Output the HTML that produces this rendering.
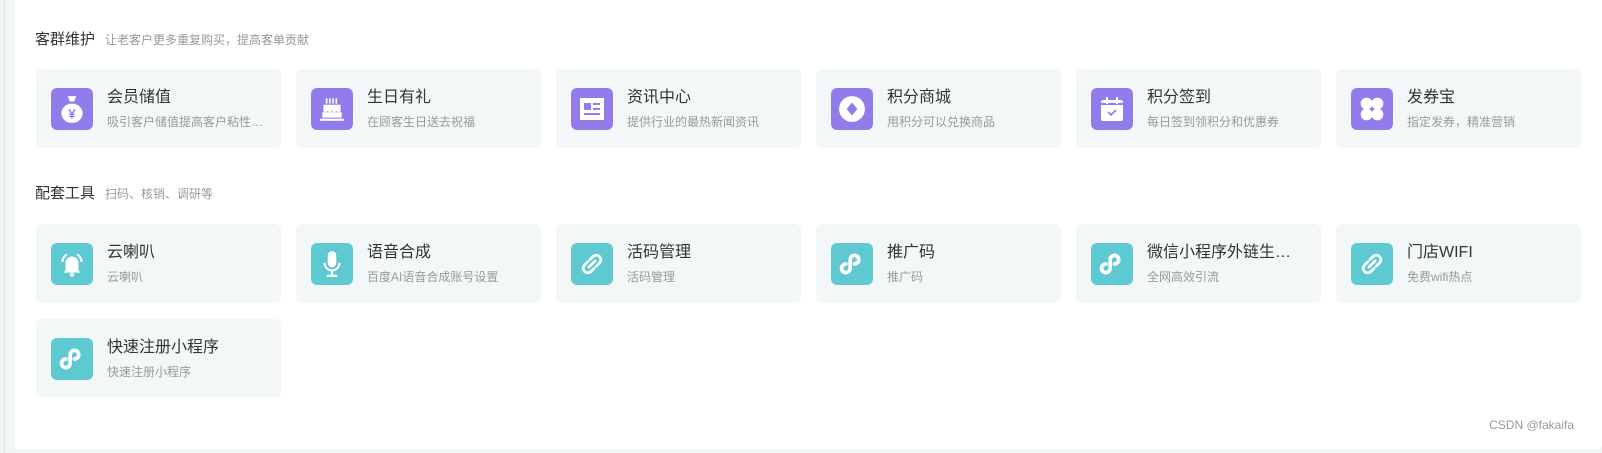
<!DOCTYPE html>
<html><head><meta charset="utf-8"><style>
*{margin:0;padding:0;box-sizing:border-box}
body{width:1602px;height:453px;background:#f3f6f7;font-family:"Liberation Sans","Noto Sans CJK SC",sans-serif;position:relative;overflow:hidden}
.lb{position:absolute;left:4px;top:0;width:1px;height:453px;background:#dde3e6}
.panel{position:absolute;left:15px;top:0;width:1587px;height:449px;background:#fff;border-radius:0 0 4px 4px}
.h{position:absolute;left:35px;font-size:15px;color:#333;line-height:20px}
.h span{font-size:12px;color:#999;margin-left:10px}
.c{position:absolute;width:245px;height:79px;background:#f4f7f8;border-radius:6px}
.ic{position:absolute;left:15px;top:19px;width:42px;height:42px;border-radius:6px;display:flex;align-items:center;justify-content:center}
.p{background:#927ceb}.t{background:#5ec9d1}
.tt{position:absolute;left:71px;top:18px;font-size:16px;color:#333;white-space:nowrap;width:150px;overflow:hidden;text-overflow:ellipsis;line-height:22px}
.st{position:absolute;left:71px;top:45px;font-size:12px;color:#999;white-space:nowrap;width:157px;overflow:hidden;text-overflow:ellipsis;line-height:16px}
.csdn{position:absolute;right:28px;top:418px;font-size:12px;color:#999}
</style></head><body>
<div class="lb"></div>
<div class="panel"></div>
<div class="h" style="top:30px">客群维护<span>让老客户更多重复购买，提高客单贡献</span></div>
<div class="h" style="top:184px">配套工具<span>扫码、核销、调研等</span></div>

<div class="c" style="left:36px;top:69px"><div class="ic p"><svg width="28" height="30" viewBox="0 0 26 28"><path d="M9 2h8l-2 5h-4z" fill="#fff"/><ellipse cx="13" cy="18" rx="10" ry="9" fill="#fff"/><text x="13" y="23" font-size="12" fill="#927ceb" text-anchor="middle" font-weight="bold">¥</text></svg></div><div class="tt">会员储值</div><div class="st">吸引客户储值提高客户粘性度度</div></div>
<div class="c" style="left:296px;top:69px"><div class="ic p"><svg width="28" height="28" viewBox="0 0 26 26"><path d="M8 3v5M11 3v5M14 3v5M17 3v5" stroke="#fff" stroke-width="1.5"/><path d="M5 9h16v6q-2 2-4 0q-2 2-4 0q-2 2-4 0q-2 2-4 0z" fill="#fff"/><rect x="4" y="16" width="18" height="5" fill="#fff"/><rect x="2" y="22" width="22" height="2" fill="#fff"/></svg></div><div class="tt">生日有礼</div><div class="st">在顾客生日送去祝福</div></div>
<div class="c" style="left:556px;top:69px"><div class="ic p"><svg width="26" height="24" viewBox="0 0 26 24"><rect x="1" y="1" width="24" height="22" fill="#fff"/><rect x="5" y="6" width="7" height="7" fill="#927ceb"/><path d="M14 7h7M14 12h7M5 17h16" stroke="#927ceb" stroke-width="2"/></svg></div><div class="tt">资讯中心</div><div class="st">提供行业的最热新闻资讯</div></div>
<div class="c" style="left:816px;top:69px"><div class="ic p"><svg width="28" height="28" viewBox="0 0 26 26"><circle cx="13" cy="13" r="12" fill="#fff"/><path d="M13 7l5 6-5 6-5-6z" fill="#927ceb"/></svg></div><div class="tt">积分商城</div><div class="st">用积分可以兑换商品</div></div>
<div class="c" style="left:1076px;top:69px"><div class="ic p"><svg width="26" height="28" viewBox="0 0 26 26"><rect x="2" y="4" width="22" height="21" rx="2" fill="#fff"/><rect x="2" y="7" width="22" height="2" fill="#927ceb"/><path d="M8 1v7M18 1v7" stroke="#fff" stroke-width="2"/><path d="M9 16l3 3 5-5" stroke="#927ceb" stroke-width="1.6" fill="none"/></svg></div><div class="tt">积分签到</div><div class="st">每日签到领积分和优惠券</div></div>
<div class="c" style="left:1336px;top:69px"><div class="ic p"><svg width="28" height="28" viewBox="0 0 26 26"><circle cx="8" cy="8" r="5.5" fill="#fff"/><circle cx="18" cy="8" r="5.5" fill="#fff"/><circle cx="8" cy="18" r="5.5" fill="#fff"/><circle cx="18" cy="18" r="5.5" fill="#fff"/></svg></div><div class="tt">发券宝</div><div class="st">指定发券，精准营销</div></div>

<div class="c" style="left:36px;top:224px"><div class="ic t"><svg width="30" height="30" viewBox="0 0 28 28"><path d="M8 20V13a6 6 0 0 1 12 0v7l2 2H6z" fill="#fff"/><circle cx="14" cy="24" r="2" fill="#fff"/><path d="M5 12a10 10 0 0 1 4-7M23 12a10 10 0 0 0-4-7" stroke="#fff" stroke-width="2" fill="none"/></svg></div><div class="tt">云喇叭</div><div class="st">云喇叭</div></div>
<div class="c" style="left:296px;top:224px"><div class="ic t"><svg width="28" height="30" viewBox="0 0 26 28"><rect x="9" y="2" width="8" height="15" rx="4" fill="#fff"/><path d="M6 13a7 7 0 0 0 14 0M13 20v5M8 25h10" stroke="#fff" stroke-width="2" fill="none"/></svg></div><div class="tt">语音合成</div><div class="st">百度AI语音合成账号设置</div></div>
<div class="c" style="left:556px;top:224px"><div class="ic t"><svg width="30" height="30" viewBox="0 0 28 28"><g stroke="#fff" stroke-width="2.5" fill="none" stroke-linecap="round"><path d="M12 10l3-3a4 4 0 0 1 6 6l-3 3"/><path d="M16 18l-3 3a4 4 0 0 1-6-6l3-3"/><path d="M11 17l6-6"/></g></svg></div><div class="tt">活码管理</div><div class="st">活码管理</div></div>
<div class="c" style="left:816px;top:224px"><div class="ic t"><svg width="32" height="32" viewBox="0 0 26 26"><path d="M8 13a3.5 3.5 0 1 0 3.5 3.5V9.5a3.5 3.5 0 1 1 3.5 3.5" stroke="#fff" stroke-width="3" fill="none" stroke-linecap="round"/></svg></div><div class="tt">推广码</div><div class="st">推广码</div></div>
<div class="c" style="left:1076px;top:224px"><div class="ic t"><svg width="32" height="32" viewBox="0 0 26 26"><path d="M8 13a3.5 3.5 0 1 0 3.5 3.5V9.5a3.5 3.5 0 1 1 3.5 3.5" stroke="#fff" stroke-width="3" fill="none" stroke-linecap="round"/></svg></div><div class="tt">微信小程序外链生成器</div><div class="st">全网高效引流</div></div>
<div class="c" style="left:1336px;top:224px"><div class="ic t"><svg width="30" height="30" viewBox="0 0 28 28"><g stroke="#fff" stroke-width="2.5" fill="none" stroke-linecap="round"><path d="M12 10l3-3a4 4 0 0 1 6 6l-3 3"/><path d="M16 18l-3 3a4 4 0 0 1-6-6l3-3"/><path d="M11 17l6-6"/></g></svg></div><div class="tt">门店WIFI</div><div class="st">免费wifi热点</div></div>

<div class="c" style="left:36px;top:319px"><div class="ic t"><svg width="32" height="32" viewBox="0 0 26 26"><path d="M8 13a3.5 3.5 0 1 0 3.5 3.5V9.5a3.5 3.5 0 1 1 3.5 3.5" stroke="#fff" stroke-width="3" fill="none" stroke-linecap="round"/></svg></div><div class="tt">快速注册小程序</div><div class="st">快速注册小程序</div></div>

<div class="csdn">CSDN @fakaifa</div>
</body></html>
